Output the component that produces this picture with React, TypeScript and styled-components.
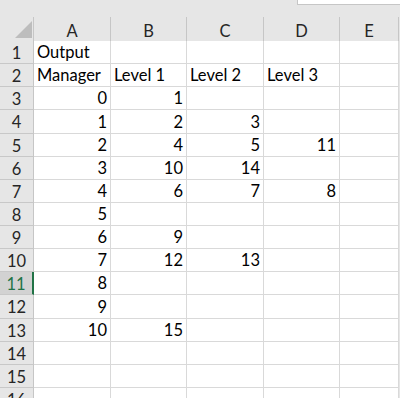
import React from 'react';
import styled, { createGlobalStyle } from 'styled-components';

const GlobalStyle = createGlobalStyle`
  html, body {
    margin: 0;
    padding: 0;
    background: #e6e6e6;
  }
  body {
    width: 400px;
    height: 398px;
    overflow: hidden;
    font-family: Lato, "Liberation Sans", sans-serif;
  }
`;

const COLS = ['A', 'B', 'C', 'D', 'E'];
const WIDTHS = '34px 77px 76px 77px 76px 59px 1fr';

// each row: [A, B, C, D, E]; numbers are right aligned like Excel
const rows: (string | number | null)[][] = [
  ['Output', null, null, null],
  ['Manager', 'Level 1', 'Level 2', 'Level 3'],
  [0, 1],
  [1, 2, 3],
  [2, 4, 5, 11],
  [3, 10, 14],
  [4, 6, 7, 8],
  [5],
  [6, 9],
  [7, 12, 13],
  [8],
  [9],
  [10, 15],
  [],
  [],
  [],
];

const SELECTED_ROW = 11;

const Window = styled.div`
  display: flex;
  flex-direction: column;
  height: 398px;
  overflow: hidden;

  & > * {
    flex-shrink: 0;
  }
`;

const TopStrip = styled.div`
  height: 17px;
  display: flex;
  justify-content: flex-end;
  background: #e6e6e6;
`;

const FormulaEdge = styled.div`
  width: 102px;
  height: 4px;
  background: #fff;
  border-left: 1px solid #c6c6c6;
  border-bottom: 1px solid #c6c6c6;
`;

const HeaderRow = styled.div`
  display: grid;
  grid-template-columns: ${WIDTHS};
  height: 24px;
  background: #e6e6e6;
`;

const Corner = styled.div`
  display: flex;
  align-items: flex-end;
  justify-content: flex-end;
  padding: 0 1px 3px 0;
  border-right: 1px solid #c6c6c6;
  border-bottom: 1px solid #ababab;
`;

const ColHead = styled.div`
  display: flex;
  align-items: center;
  justify-content: center;
  padding-top: 4px;
  font-size: 16.5px;
  color: #262626;
  border-right: 1px solid #c6c6c6;
  border-bottom: 1px solid #ababab;
`;

const Body = styled.div`
  display: grid;
  grid-template-columns: ${WIDTHS};
  grid-auto-rows: 23.14px;
  background: #fff;
`;

const RowHead = styled.div<{ $selected?: boolean }>`
  display: flex;
  align-items: center;
  justify-content: center;
  padding-top: 2px;
  font-size: 16.5px;
  background: ${(p) => (p.$selected ? '#d2d2d2' : '#e6e6e6')};
  color: ${(p) => (p.$selected ? '#217346' : '#262626')};
  border-bottom: 1px solid #c8c8c8;
  border-right: ${(p) => (p.$selected ? '2px solid #217346' : '1px solid #c6c6c6')};
`;

const Cell = styled.div<{ $num?: boolean }>`
  display: flex;
  align-items: flex-end;
  justify-content: ${(p) => (p.$num ? 'flex-end' : 'flex-start')};
  padding: 0 3px 1px 3px;
  font-size: 16.5px;
  color: #000;
  white-space: nowrap;
  border-right: 1px solid #d9d9d9;
  border-bottom: 1px solid #d9d9d9;
`;

const Filler = styled.div`
  background: #e6e6e6;
`;

const App = () => {
  return (
    <>
      <GlobalStyle />
      <Window>
        <TopStrip>
          <FormulaEdge />
        </TopStrip>
        <HeaderRow>
          <Corner>
            <svg width="17" height="17" viewBox="0 0 17 17">
              <polygon points="17,0 17,17 0,17" fill="#bdbdbd" />
            </svg>
          </Corner>
          {COLS.map((c) => (
            <ColHead key={c}>{c}</ColHead>
          ))}
          <Filler />
        </HeaderRow>
        <Body>
          {rows.map((r, i) => (
            <React.Fragment key={i}>
              <RowHead $selected={i + 1 === SELECTED_ROW}>{i + 1}</RowHead>
              {COLS.map((c, j) => {
                const v = r[j];
                return (
                  <Cell key={c} $num={typeof v === 'number'}>
                    {v ?? ''}
                  </Cell>
                );
              })}
              <Filler />
            </React.Fragment>
          ))}
        </Body>
      </Window>
    </>
  );
};

export default App;
